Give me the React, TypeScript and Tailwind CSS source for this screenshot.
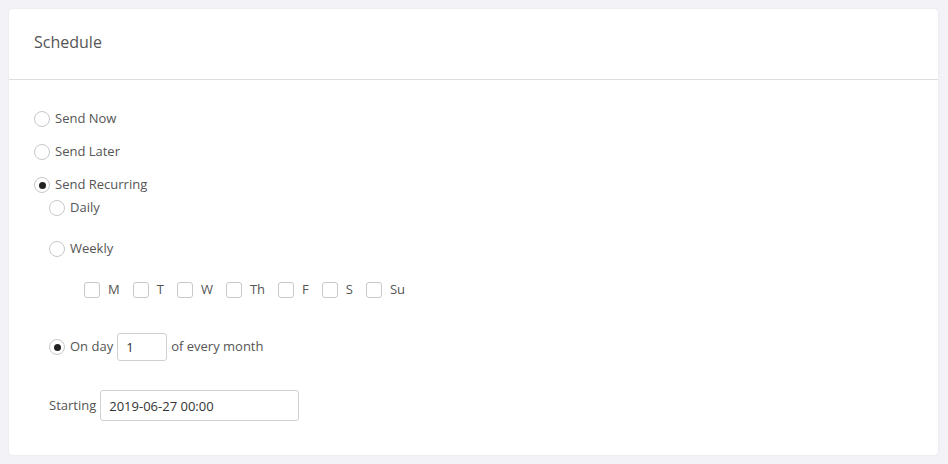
import React from 'react';

const days = ['M', 'T', 'W', 'Th', 'F', 'S', 'Su'];

function Radio({ checked = false }: { checked?: boolean }) {
	return (
		<span className="flex h-4 w-4 shrink-0 items-center justify-center rounded-full border border-[#c8c8c8] bg-white">
			{checked && <span className="h-[7px] w-[7px] rounded-full bg-[#222]" />}
		</span>
	);
}

function Check() {
	return <span className="h-4 w-4 shrink-0 rounded-[3px] border border-[#c8c8c8] bg-white" />;
}

export default function App() {
	return (
		<div className="min-h-screen bg-[#f3f3f7] p-[9px] text-[13px] text-[#555] [font-family:'Open_Sans',sans-serif]">
			<div className="w-[929px] rounded-[4px] bg-white shadow-[0_0_2px_rgba(0,0,0,0.08)]">
				{/* header */}
				<div className="flex h-[71px] items-center border-b border-[#dedede] px-[25px] pb-[4px]">
					<h2 className="text-[16px] leading-none text-[#555]">Schedule</h2>
				</div>

				{/* body */}
				<div className="flex flex-col px-[25px] pt-[29px] pb-[34px]">
					<label className="flex h-5 items-center gap-[5px]">
						<Radio />
						<span>Send Now</span>
					</label>
					<label className="mt-[13px] flex h-5 items-center gap-[5px]">
						<Radio />
						<span>Send Later</span>
					</label>
					<label className="mt-[13px] flex h-5 items-center gap-[5px]">
						<Radio checked />
						<span>Send Recurring</span>
					</label>

					<div className="pl-[15px]">
						<label className="mt-[3px] flex h-5 items-center gap-[5px]">
							<Radio />
							<span>Daily</span>
						</label>
						<label className="mt-[21px] flex h-5 items-center gap-[5px]">
							<Radio />
							<span>Weekly</span>
						</label>

						<div className="mt-[21px] flex h-5 items-center pl-[35px]">
							{days.map((d) => (
								<label key={d} className="mr-[13px] flex items-center gap-[8px]">
									<Check />
									<span>{d}</span>
								</label>
							))}
						</div>

						<div className="mt-[33px] flex h-[28px] items-center">
							<Radio checked />
							<span className="ml-[5px]">On day</span>
							<input
								defaultValue="1"
								className="ml-[4px] h-[28px] w-[50px] rounded-[3px] border border-[#d0d0d0] px-[8px] text-[13px] text-[#333] outline-none"
							/>
							<span className="ml-[4px]">of every month</span>
						</div>

						<div className="mt-[29px] flex h-[31px] items-center">
							<span>Starting</span>
							<input
								defaultValue="2019-06-27 00:00"
								className="ml-[4px] h-[31px] w-[199px] rounded-[3px] border border-[#d0d0d0] px-[8px] text-[13px] text-[#333] outline-none"
							/>
						</div>
					</div>
				</div>
			</div>
		</div>
	);
}
